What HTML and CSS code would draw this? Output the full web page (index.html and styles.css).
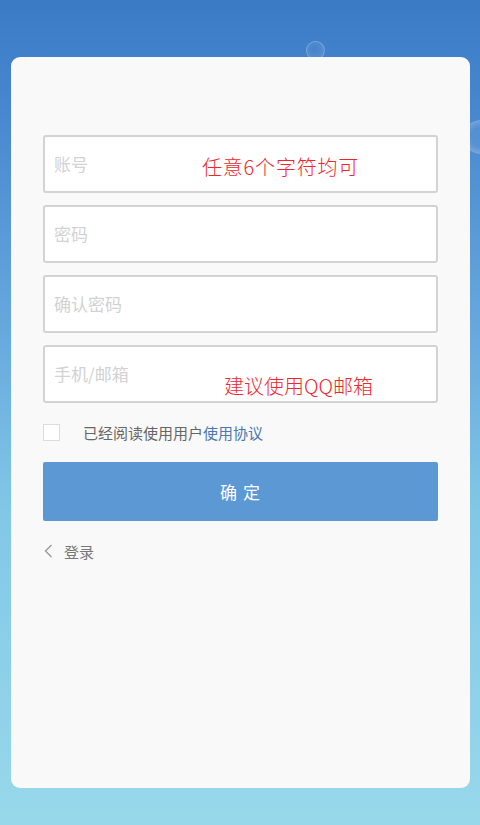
FILE: index.html
```html
<!DOCTYPE html>
<html lang="zh-CN">
<head>
<meta charset="utf-8">
<title>注册</title>
<link rel="stylesheet" href="styles.css">
</head>
<body>
<div class="bubble bubble-a"></div>
<div class="bubble bubble-b"></div>
<main class="card">
  <div class="fields">
    <div class="field">
      <input class="input" type="text" placeholder="账号">
      <span class="note note-account">任意6个字符均可</span>
    </div>
    <div class="field">
      <input class="input" type="password" placeholder="密码">
    </div>
    <div class="field">
      <input class="input" type="password" placeholder="确认密码">
    </div>
    <div class="field">
      <input class="input" type="text" placeholder="手机/邮箱">
      <span class="note note-mail">建议使用QQ邮箱</span>
    </div>
  </div>
  <label class="agree">
    <span class="checkbox"></span>
    <span class="agree-text">已经阅读使用用户<span class="link">使用协议</span></span>
  </label>
  <button class="submit" type="button">确 定</button>
  <div class="back">
    <svg class="chev" width="9" height="14" viewBox="0 0 9 14"><path d="M7.5 1 L1.5 7 L7.5 13" fill="none" stroke="#9a9a9a" stroke-width="1.4"/></svg>
    <span>登录</span>
  </div>
</main>
</body>
</html>
```
FILE: styles.css
```css
html, body {
  margin: 0;
  padding: 0;
}
body {
  width: 480px;
  height: 825px;
  box-sizing: border-box;
  padding: 57px 10px 0 11px;
  background: linear-gradient(to bottom, #3b7bc6 0%, #4888d0 14%, #6cafe0 45%, #81c8e6 62%, #98d8eb 100%);
  font-family: "Noto Sans CJK SC", "Noto Sans", sans-serif;
  position: relative;
  overflow: hidden;
}
.bubble {
  position: absolute;
  border-radius: 50%;
}
.bubble-a {
  left: 306px;
  top: 41px;
  width: 17px;
  height: 17px;
  border: 1px solid rgba(255,255,255,0.22);
  background: radial-gradient(circle at 45% 40%, rgba(255,255,255,0.02), rgba(255,255,255,0.12) 75%, rgba(255,255,255,0.2));
}
.bubble-b {
  left: 462px;
  top: 120px;
  width: 40px;
  height: 34px;
  background: radial-gradient(ellipse at 50% 50%, rgba(255,255,255,0.05) 40%, rgba(255,255,255,0.22) 70%, rgba(255,255,255,0) 100%);
}
.card {
  position: relative;
  width: 459px;
  height: 731px;
  box-sizing: border-box;
  background: #f9f9f9;
  border-radius: 9px;
  padding: 78px 32px 0 32px;
}
.fields {
  display: flex;
  flex-direction: column;
  gap: 12px;
}
.field {
  position: relative;
  height: 58px;
  box-sizing: border-box;
  border: 2px solid #d3d3d3;
  border-radius: 3px;
  background: #ffffff;
}
.input {
  display: block;
  width: 100%;
  height: 100%;
  box-sizing: border-box;
  border: 0;
  outline: none;
  background: transparent;
  padding: 0 0 2px 9px;
  font-family: "Noto Sans CJK SC", "Noto Sans", sans-serif;
  font-size: 17px;
  color: #333;
}
.input::placeholder {
  color: #d2d2d2;
}
.note {
  position: absolute;
  font-family: "Noto Sans CJK SC", "Noto Sans", sans-serif;
  font-weight: 300;
  font-size: 20px;
  line-height: 20px;
  color: #f0262d;
  white-space: nowrap;
}
.note-account {
  left: 157px;
  top: 20px;
  letter-spacing: 0.8px;
}
.note-mail {
  left: 179px;
  top: 29px;
}
.agree {
  display: flex;
  align-items: center;
  margin-top: 21px;
  height: 17px;
}
.checkbox {
  width: 17px;
  height: 17px;
  box-sizing: border-box;
  border: 1px solid #dcdcdc;
  background: #fff;
  flex: none;
}
.agree-text {
  margin-left: 23px;
  font-size: 15px;
  color: #666666;
  line-height: 17px;
}
.link {
  color: #4a77b0;
}
.submit {
  display: block;
  margin-top: 21px;
  width: 100%;
  height: 59px;
  border: 0;
  border-radius: 2px;
  background: #5b98d4;
  color: #ffffff;
  font-family: "Noto Sans CJK SC", "Noto Sans", sans-serif;
  font-size: 17px;
  letter-spacing: 1px;
}
.back {
  display: flex;
  align-items: center;
  margin-top: 20px;
  height: 20px;
  color: #777777;
  font-size: 15px;
}
.chev {
  margin-left: 1px;
  margin-right: 11px;
}
```
